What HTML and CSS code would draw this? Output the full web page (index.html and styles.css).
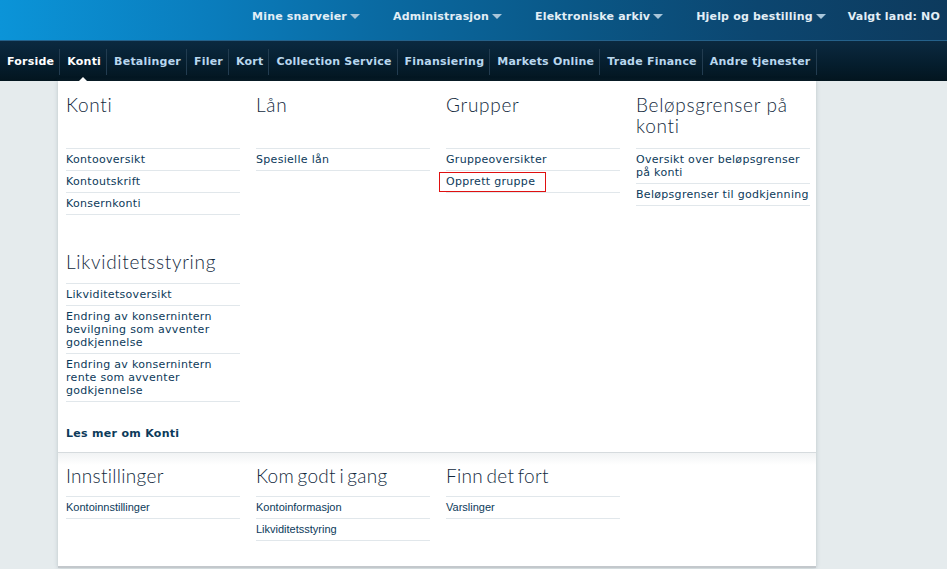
FILE: index.html
```html
<!DOCTYPE html>
<html lang="no">
<head>
<meta charset="utf-8">
<title>Konti</title>
<link rel="stylesheet" href="styles.css">
</head>
<body>
<header class="topbar">
  <ul class="toplinks">
    <li class="toplink">Mine snarveier<span class="caret"></span></li>
    <li class="toplink">Administrasjon<span class="caret"></span></li>
    <li class="toplink">Elektroniske arkiv<span class="caret"></span></li>
    <li class="toplink">Hjelp og bestilling<span class="caret"></span></li>
    <li class="toplink country">Valgt land: NO</li>
  </ul>
</header>
<nav class="mainnav">
  <ul class="navlist">
    <li class="navitem current">Forside</li>
    <li class="navitem current active">Konti</li>
    <li class="navitem">Betalinger</li>
    <li class="navitem">Filer</li>
    <li class="navitem">Kort</li>
    <li class="navitem">Collection Service</li>
    <li class="navitem">Finansiering</li>
    <li class="navitem">Markets Online</li>
    <li class="navitem">Trade Finance</li>
    <li class="navitem">Andre tjenester</li>
  </ul>
</nav>
<section class="panel">
  <div class="panel-main">
    <h2 class="gh c1 r1">Konti</h2>
    <ul class="links c1 r2">
      <li>Kontooversikt</li>
      <li>Kontoutskrift</li>
      <li>Konsernkonti</li>
    </ul>
    <h2 class="gh c2 r1">Lån</h2>
    <ul class="links c2 r2">
      <li>Spesielle lån</li>
    </ul>
    <h2 class="gh c3 r1">Grupper</h2>
    <ul class="links c3 r2">
      <li>Gruppeoversikter</li>
      <li><span class="marked">Opprett gruppe</span></li>
    </ul>
    <h2 class="gh c4 r1">Beløpsgrenser på konti</h2>
    <ul class="links c4 r2">
      <li>Oversikt over beløpsgrenser på konti</li>
      <li>Beløpsgrenser til godkjenning</li>
    </ul>
    <h2 class="gh c1 r3 later">Likviditetsstyring</h2>
    <ul class="links c1 r4">
      <li>Likviditetsoversikt</li>
      <li>Endring av konsernintern bevilgning som avventer godkjennelse</li>
      <li>Endring av konsernintern rente som avventer godkjennelse</li>
    </ul>
    <p class="readmore c1 r5">Les mer om Konti</p>
  </div>
  <div class="panel-foot">
    <div class="fcol">
      <h2 class="fh">Innstillinger</h2>
      <ul class="links flinks">
        <li>Kontoinnstillinger</li>
      </ul>
    </div>
    <div class="fcol">
      <h2 class="fh">Kom godt i gang</h2>
      <ul class="links flinks">
        <li>Kontoinformasjon</li>
        <li>Likviditetsstyring</li>
      </ul>
    </div>
    <div class="fcol">
      <h2 class="fh">Finn det fort</h2>
      <ul class="links flinks">
        <li>Varslinger</li>
      </ul>
    </div>
  </div>
</section>
</body>
</html>
```
FILE: styles.css
```css
* { box-sizing: border-box; }
html, body { margin: 0; padding: 0; }
body {
  background: #e5ebed;
  font-family: "DejaVu Sans", Verdana, sans-serif;
  width: 947px;
  height: 569px;
  overflow: hidden;
}
ul { list-style: none; margin: 0; padding: 0; }
h2, p { margin: 0; }

/* top bar */
.topbar {
  height: 41px;
  background: linear-gradient(to right, #0b94d8 0%, #0a7dbd 22%, #0a6aa2 40%, #0a5685 62%, #0c4670 80%, #0d3a5d 100%);
  border-bottom: 1px solid #25618a;
}
.toplinks {
  display: flex;
  justify-content: flex-end;
  align-items: center;
  height: 40px;
  padding-right: 7px;
  gap: 33px;
}
.toplink {
  display: flex;
  align-items: center;
  color: #e2eef6;
  font-weight: bold;
  font-size: 11px;
  letter-spacing: 0.18px;
  padding-bottom: 7px;
}
.toplink.country { margin-left: -11px; }
.caret {
  display: inline-block;
  width: 0; height: 0;
  margin-left: 3px;
  border-left: 5px solid transparent;
  border-right: 5px solid transparent;
  border-top: 5px solid #a9c6da;
}

/* main nav */
.mainnav {
  height: 40px;
  background: linear-gradient(#0b2940, #051d2d 60%, #03151f);
}
.navlist {
  display: flex;
  align-items: center;
  height: 40px;
  padding-top: 2px;
}
.navitem {
  position: relative;
  height: 26px;
  line-height: 26px;
  padding: 0 5px 0 7px;
  border-right: 1px solid #223c50;
  color: #b9d7ee;
  font-weight: bold;
  font-size: 11px;
  letter-spacing: 0.22px;
}
.navitem.current { color: #ffffff; }
.navitem.active::after {
  content: "";
  position: absolute;
  left: 50%;
  bottom: -8px;
  margin-left: -6px;
  border-left: 6px solid transparent;
  border-right: 6px solid transparent;
  border-bottom: 6px solid #ffffff;
}

/* panel */
.panel {
  margin-left: 58px;
  width: 758px;
  background: #fff;
  box-shadow: 0 0 4px rgba(60, 80, 95, 0.25);
  border-bottom: 2px solid #c3c8cc;
}
.panel-main {
  display: grid;
  grid-template-columns: repeat(4, 174px);
  column-gap: 16px;
  padding: 13px 6px 12px 8px;
  align-items: start;
}
.c1 { grid-column: 1; }
.c2 { grid-column: 2; }
.c3 { grid-column: 3; }
.c4 { grid-column: 4; }
.r1 { grid-row: 1; }
.r2 { grid-row: 2; }
.r3 { grid-row: 3; }
.r4 { grid-row: 4; }
.r5 { grid-row: 5; }

.gh, .fh {
  font-family: Lato, "Open Sans", sans-serif;
  font-weight: 300;
  font-size: 19px;
  line-height: 21px;
  color: #12293d;
  letter-spacing: 0.7px;
}
.gh { margin-bottom: 12px; }
.gh.later { margin-top: 36px; margin-bottom: 11px; }

.links {
  border-top: 1px solid #e1e7eb;
  color: #0c3a5a;
  font-size: 11px;
  line-height: 13px;
  letter-spacing: 0.3px;
}
.links li {
  padding: 4px 0;
  border-bottom: 1px solid #e1e7eb;
}
.marked {
  display: inline-block;
  outline: 1px solid #e01010;
  outline-offset: 0;
  padding: 2px 10px 3px 6px;
  margin: -3px 0 -3px -6px;
}
.readmore {
  margin-top: 25px;
  color: #0c3a5a;
  font-weight: bold;
  font-size: 11px;
  line-height: 13px;
  letter-spacing: 0.3px;
}

/* footer section of panel */
.panel-foot {
  display: flex;
  gap: 16px;
  padding: 12px 6px 25px 8px;
  border-top: 1px solid #d6dbde;
  background: linear-gradient(#f1f3f4, #ffffff 12px);
}
.fcol { width: 174px; }
.fh {
  margin-bottom: 10px;
  letter-spacing: 0.3px;
  word-spacing: -2px;
}
.flinks {
  font-family: "Liberation Sans", Arial, sans-serif;
  letter-spacing: 0;
}
```
